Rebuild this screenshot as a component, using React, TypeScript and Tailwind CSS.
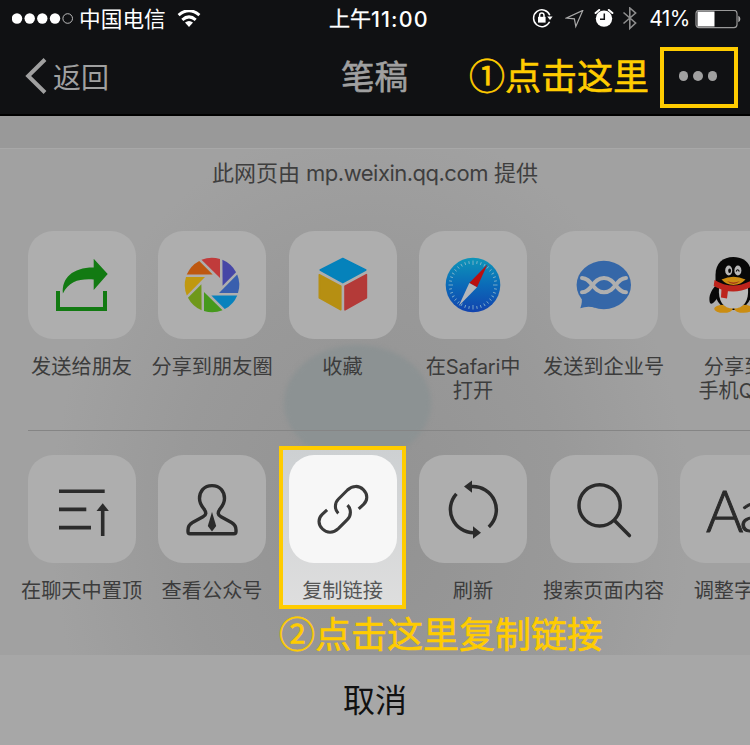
import type { ReactNode } from "react";

const INK = "#2b2b2b";

function ShareIcon() {
  return (
    <>
      <path d="M30 60V78H77V60" fill="none" stroke="#127a12" strokeWidth="4" />
      <path d="M65.7 27.7 79.7 43 65.7 59V48.5C52 47.5 41 50 34.9 62.5 33.5 47 45 36.4 65.7 36.6Z" fill="#127a12" />
    </>
  );
}

const BLADES = ["#c03b3b", "#4646a6", "#395fae", "#0882bd", "#46991d", "#6f981a", "#c09810", "#be5810"];

function MomentsIcon() {
  return (
    <g transform="translate(54 54)">
      {BLADES.map((c, i) => (
        <path key={c} d="M8 -7V-26A27.2 27.2 0 0 0 -10.5 -25.2Z" fill={c} transform={`rotate(${i * 45})`} />
      ))}
    </g>
  );
}

function CubeIcon() {
  return (
    <g strokeWidth="1.6" strokeLinejoin="round">
      <path d="M53.8 27.5 76.8 39 53.8 51.6 31.2 39Z" fill="#0582bb" stroke="#0582bb" />
      <path d="M30.3 43.7 51.8 55.3V78.8L30.3 66.8Z" fill="#b68f12" stroke="#b68f12" />
      <path d="M56 55.3 77.4 43.7V66.8L56 78.8Z" fill="#b43a38" stroke="#b43a38" />
    </g>
  );
}

function SafariIcon() {
  return (
    <>
      <defs>
        <linearGradient id="compass" x1="0" y1="0" x2="0" y2="1">
          <stop offset="0" stopColor="#0e95b8" />
          <stop offset="0.5" stopColor="#0b6bb8" />
          <stop offset="1" stopColor="#1243ae" />
        </linearGradient>
      </defs>
      <circle cx="54" cy="54" r="27.3" fill="url(#compass)" />
      {Array.from({ length: 36 }, (_, i) => (
        <path
          key={i}
          d={i % 9 === 0 ? "M54 29.5V34" : "M54 29.8V32.6"}
          stroke="#8fb9cc"
          strokeWidth="0.8"
          transform={`rotate(${i * 10} 54 54)`}
        />
      ))}
      <path d="M68.5 33.3 58 56.3 50.3 52Z" fill="#b90f10" />
      <path d="M39.7 75 50.3 52 58 56.3Z" fill="#b4b6ba" />
    </>
  );
}

function EnterpriseIcon() {
  return (
    <>
      <ellipse cx="53.8" cy="54" rx="27.2" ry="24.2" fill="#3567a8" />
      <path d="M31 65Q33 70 30.3 77.2 37 74.5 45 76.5L50 70Z" fill="#3567a8" />
      <g fill="none" strokeLinecap="round">
        <path d="M32 61.3C42 61.3 42.5 47 54 47S66 61.3 76 61.3" stroke="#afafaf" strokeWidth="4" />
        <path d="M32 47C42 47 42.5 61.3 54 61.3S66 47 76 47" stroke="#afafaf" strokeWidth="4" />
      </g>
    </>
  );
}

function PenguinIcon() {
  return (
    <>
      <path d="M37 53C31 59 28 66 30 72 32 75 36 69 38 66ZM70 53C76 59 79 66 77 72 75 75 71 69 69 66Z" fill="#080808" />
      <ellipse cx="53.4" cy="62" rx="18" ry="17" fill="#080808" />
      <ellipse cx="43.5" cy="77.8" rx="9.3" ry="4" fill="#cb8d12" />
      <ellipse cx="63.5" cy="77.8" rx="9.3" ry="4" fill="#cb8d12" />
      <path d="M38 62C38 82 69 82 69 62Z" fill="#080808" />
      <path d="M39 57C38 70 43 77.5 53.4 77.5S69 70 68 57Z" fill="#b9b9b9" />
      <path d="M35.5 50V44C35.5 32 43 26 53.4 26S71.3 32 71.3 44V50Q53 64 35.5 50Z" fill="#080808" />
      <path d="M34.5 49Q53 60 72.3 49L73 55Q53 66 33.7 55Z" fill="#bd241c" />
      <path d="M41.5 57.5 48 59.5 47 67.5 41 66.5Z" fill="#bd241c" />
      <ellipse cx="48.7" cy="39.5" rx="3.5" ry="5" fill="#b9b9b9" />
      <ellipse cx="57.9" cy="39.5" rx="3.5" ry="5" fill="#b9b9b9" />
      <ellipse cx="49.6" cy="39.8" rx="1.4" ry="2.3" fill="#080808" />
      <path d="M56.2 40.5Q57.6 37 59.3 40.5" fill="none" stroke="#080808" strokeWidth="1.2" />
      <path d="M41.5 48.5Q53.4 43 65.5 48.5 61 53.5 53.4 54 46 53.5 41.5 48.5Z" fill="#cb8d12" />
      <path d="M47 50Q53.4 52.8 60 50 53.4 56 47 50Z" fill="#a33a18" />
    </>
  );
}

function PinTopIcon() {
  return (
    <>
      <path d="M31 36.3H76.7M31 54.4H58.3M31 72.6H63M74.7 81V54" stroke={INK} strokeWidth="3.6" />
      <path d="M74.7 48.3 80.9 56H68.5Z" fill={INK} />
    </>
  );
}

function PersonIcon() {
  return (
    <>
      <path
        d="M54 30.6C46 30.6 41.5 36.5 41.5 43.5 41.5 48 43.5 51 46 54 48.5 57.5 48.5 60 45 61.8L34.5 67.5C31 69.5 30 71.5 30 75V76.5Q30 78.7 32 78.7H76Q78 78.7 78 76.5V75C78 71.5 77 69.5 73.5 67.5L63 61.8C59.5 60 59.5 57.5 62 54 64.5 51 66.5 48 66.5 43.5 66.5 36.5 62 30.6 54 30.6Z"
        fill="none"
        stroke={INK}
        strokeWidth="3.4"
      />
      <path d="M54 57 58.2 71 54 76.5 49.8 71Z" fill={INK} />
    </>
  );
}

const LINK_HALF = "M49.3 58.4C45.4 54.5 45.4 48 49.5 44L58.5 35C63.5 30.3 70 30.3 74.3 34.6 79 39.2 78.8 45.3 74.6 49.3L69.7 53.8";

function LinkIcon() {
  return (
    <g fill="none" stroke="#3a3a3a" strokeWidth="3.1">
      <path d={LINK_HALF} />
      <path d={LINK_HALF} transform="rotate(180 53.9 54.3)" />
    </g>
  );
}

function RefreshIcon() {
  return (
    <>
      <path d="M52.5 31.6A23.3 23.3 0 0 1 69.8 72M37.4 38.8A23.3 23.3 0 0 0 55 77.7" fill="none" stroke={INK} strokeWidth="3.5" />
      <path d="M45 31.6 53 25.4V37.8ZM62 77.7 54 71.3V83.8Z" fill={INK} />
    </>
  );
}

function SearchIcon() {
  return (
    <g fill="none" stroke={INK} strokeWidth="3.5" strokeLinecap="round">
      <circle cx="49.6" cy="50.3" r="20.6" />
      <path d="M64.5 65.5 79.4 80.6" />
    </g>
  );
}

function Tile({ label, lit, children }: { label: ReactNode; lit?: boolean; children: ReactNode }) {
  return (
    <div className="relative flex w-[130.5px] shrink-0 flex-col items-center">
      {lit && (
        <div className="absolute -top-[9px] left-[2px] h-[163px] w-[127px] border-4 border-[#fc0] bg-linear-to-b from-[#cdd0d2] to-[#dedede]" />
      )}
      <div
        className={`relative h-[108px] w-[108px] shrink-0 overflow-hidden rounded-[25px] ${lit ? "bg-[#f7f7f7]" : "bg-[#aeaeae]"}`}
      >
        {children}
      </div>
      <div
        className={`relative mt-4 whitespace-nowrap text-center text-[20.2px] leading-6 ${lit ? "text-[#555]" : "text-[#3c3c3c]"}`}
      >
        {label}
      </div>
    </div>
  );
}

function Art({ children }: { children: ReactNode }) {
  return (
    <svg viewBox="0 0 108 108" className="block h-[108px] w-[108px]">
      {children}
    </svg>
  );
}

function StatusBar() {
  return (
    <div className="grid h-[38px] grid-cols-[329px_1fr_auto] items-center pl-3 pr-[9px] text-white">
      <div className="flex items-center">
        <svg viewBox="0 0 62 12" className="h-3 w-[62px]">
          {[5, 17.7, 30.3, 43].map((x) => (
            <circle key={x} cx={x} cy="5.5" r="5.2" fill="#fff" />
          ))}
          <circle cx="55.7" cy="5.5" r="4.8" fill="none" stroke="#ccc" strokeWidth="0.9" />
        </svg>
        <span className="ml-[5px] text-[21.7px] leading-[38px]">中国电信</span>
        <svg viewBox="0 0 24 18" className="ml-[11px] h-[18px] w-6" fill="none" stroke="#fff" strokeWidth="3">
          <path d="M1.6 5.2Q12 -3.8 22.4 5.2" />
          <path d="M5.3 9.8Q12 3.9 18.7 9.8" />
          <path d="M8 12.6Q12 9.6 16 12.6L12 17Z" fill="#fff" stroke="none" />
        </svg>
      </div>
      <div className="-ml-3 flex items-center text-[21px] leading-[38px]">
        <span className="[-webkit-text-stroke:0.3px_#fff]">上午</span>
        <span className="text-[21.5px] font-medium tracking-[1.1px]">11:00</span>
      </div>
      <div className="flex items-center justify-end">
        <svg viewBox="0 0 21 20" className="h-5 w-[21px]" fill="none" stroke="#fff" strokeWidth="1.5">
          <path d="M17.6 12.8A8.4 8.4 0 1 1 17.8 6.2" />
          <path d="M15.2 7.6H20.6L18 11Z" fill="#fff" stroke="none" />
          <rect x="6" y="7.8" width="7.6" height="5.8" fill="#fff" stroke="none" />
          <path d="M7.6 8V6.2A2.2 2.2 0 0 1 12 6.2V8" />
        </svg>
        <svg viewBox="0 0 19 19" className="ml-3 h-[19px] w-[19px]" fill="none" stroke="#aaa" strokeWidth="1.2">
          <path d="M17.8 0.4 1.5 8 9.4 8.9 10.8 16.5Z" />
        </svg>
        <svg viewBox="0 0 20 20" className="ml-[10px] h-5 w-5">
          <circle cx="10" cy="9.6" r="8.2" fill="#fff" />
          <path d="M1.6 4 5.2 1M14.8 1 18.4 4" stroke="#fff" strokeWidth="2" strokeLinecap="round" />
          <path d="M10.3 4.5V10.2H6" fill="none" stroke="#101113" strokeWidth="1.5" />
        </svg>
        <svg viewBox="0 0 16 24" className="ml-2 h-6 w-4" fill="none" stroke="#8d8d8d" strokeWidth="1.6">
          <path d="M1.5 5.5 13.6 16 7.8 21.5V1L13.6 6 1.5 16.5" />
        </svg>
        <span className="ml-[11px] font-[Inter,sans-serif] text-[21px] leading-[38px] tracking-[-0.5px]">41%</span>
        <svg viewBox="0 0 46 19" className="ml-[5px] h-[19px] w-[46px]">
          <rect x="1" y="0.4" width="41" height="17.2" rx="3" fill="none" stroke="#999" strokeWidth="1.2" />
          <path d="M2.5 1.5H19.5V16.5H2.5Z" fill="#fff" />
          <path d="M43.3 5.7Q45.4 6.5 45.4 9T43.3 12.3Z" fill="#aaa" />
        </svg>
      </div>
    </div>
  );
}

function NavBar() {
  return (
    <div className="grid h-[78px] grid-cols-[341px_129px_1fr] items-center border-b-2 border-black font-['Noto_Sans_CJK_SC',sans-serif] text-[#a0a0a0]">
      <div className="flex items-center pl-[25px]">
        <svg viewBox="0 0 22 36" className="h-9 w-[22px]" fill="none" stroke="#a0a0a0" strokeWidth="4">
          <path d="M20 1.5 3.2 18 20 34.5" />
        </svg>
        <span className="ml-[6px] text-[28px] leading-10">返回</span>
      </div>
      <div className="pb-[3px] text-[33.5px] leading-10 [-webkit-text-stroke:0.6px_#a0a0a0]">笔稿</div>
      <div className="flex items-center">
        <span className="-ml-px w-[191px] whitespace-nowrap pb-[5px] text-[36px] leading-10 text-[#fc0] [-webkit-text-stroke:0.6px_#fc0]">①点击这里</span>
        <div className="mt-0.5 flex h-[61px] w-[78px] items-center justify-center gap-[5px] border-4 border-[#fc0] pb-[2px] pr-[2px]">
          <i className="h-[9.5px] w-[9.5px] rounded-full bg-[#a0a0a0]" />
          <i className="h-[9.5px] w-[9.5px] rounded-full bg-[#a0a0a0]" />
          <i className="h-[9.5px] w-[9.5px] rounded-full bg-[#a0a0a0]" />
        </div>
      </div>
    </div>
  );
}

export default function App() {
  return (
    <div className="flex h-[745px] w-[750px] flex-col overflow-hidden bg-[#999] font-[Inter,'Noto_Sans_CJK_SC',sans-serif]">
      <header className="h-[116px] shrink-0 bg-[#101113]">
        <StatusBar />
        <NavBar />
      </header>
      <div className="h-8 shrink-0 bg-[#999]" />
      <main className="relative h-[507px] shrink-0 overflow-hidden border-t border-[#a8a8a8] bg-[#a0a0a0] bg-[radial-gradient(ellipse_320px_400px_at_370px_370px,#929292_0%,#999_60%,#a1a1a1_100%)]">
        <div className="absolute left-[284px] top-[196px] h-[116px] w-[147px] rounded-[50%] bg-[#8c9293] blur-[2px]" />
        <p className="relative mt-1 text-center text-[22px] leading-10 text-[#3e3e3e]">
          此网页由 <span className="tracking-[-0.5px]">mp.weixin.qq.com</span> 提供
        </p>
        <div className="relative mt-[38px] flex h-[199px] pl-[16.3px]">
          <Tile label="发送给朋友"><Art><ShareIcon /></Art></Tile>
          <Tile label="分享到朋友圈"><Art><MomentsIcon /></Art></Tile>
          <Tile label="收藏"><Art><CubeIcon /></Art></Tile>
          <Tile label={<><span className="tracking-[-0.2px]">在Safari中</span><br />打开</>}><Art><SafariIcon /></Art></Tile>
          <Tile label="发送到企业号"><Art><EnterpriseIcon /></Art></Tile>
          <Tile label={<>分享到<br />手机QQ</>}><Art><PenguinIcon /></Art></Tile>
        </div>
        <div className="relative ml-7 h-px bg-[#858585]" />
        <div className="relative mt-6 flex h-[158px] pl-[16.3px]">
          <Tile label="在聊天中置顶"><Art><PinTopIcon /></Art></Tile>
          <Tile label="查看公众号"><Art><PersonIcon /></Art></Tile>
          <Tile label="复制链接" lit><Art><LinkIcon /></Art></Tile>
          <Tile label="刷新"><Art><RefreshIcon /></Art></Tile>
          <Tile label="搜索页面内容"><Art><SearchIcon /></Art></Tile>
          <Tile label="调整字体">
            <span className="block pl-[26px] pt-[13px] font-[Lato,sans-serif] text-[57px] font-light leading-[84px] tracking-[-4px] text-[#2b2b2b] [-webkit-text-stroke:1px_#2b2b2b]">Aa</span>
          </Tile>
        </div>
        <p className="relative -mt-px ml-[279px] whitespace-nowrap font-['Noto_Sans_CJK_SC',sans-serif] text-[36px] leading-10 text-[#fc0] [-webkit-text-stroke:0.6px_#fc0]">②点击这里复制链接</p>
      </main>
      <footer className="flex h-[90px] shrink-0 items-center justify-center bg-[#a7a7a7] pb-[5px] font-['Noto_Sans_CJK_SC',sans-serif] text-[32px] text-[#111]">取消</footer>
    </div>
  );
}
